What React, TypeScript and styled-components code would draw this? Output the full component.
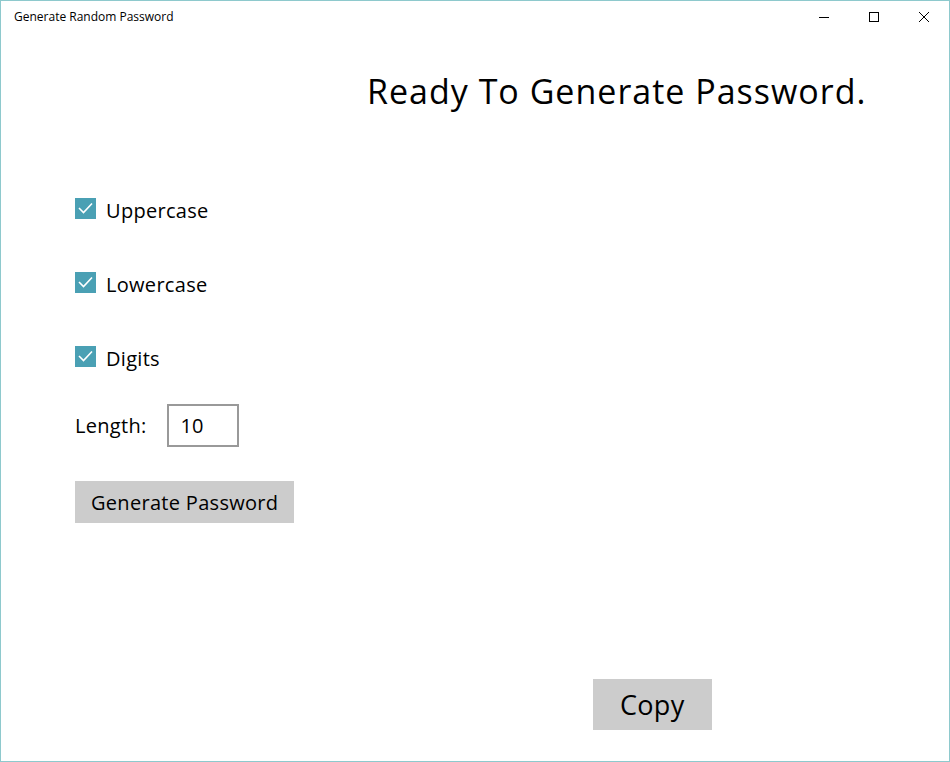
import React, {useState} from 'react';
import styled, {createGlobalStyle} from 'styled-components';

const GlobalStyle = createGlobalStyle`
  html, body {
    margin: 0;
    padding: 0;
    background: #ffffff;
  }
  body {
    font-family: "Open Sans", "Noto Sans", sans-serif;
    color: #000000;
  }
`;

const Window = styled.div`
  display: flex;
  flex-direction: column;
  width: 950px;
  height: 762px;
  box-sizing: border-box;
  border: 1px solid #8ec9cd;
  background: #ffffff;
`;

const TitleBar = styled.div`
  display: flex;
  align-items: center;
  height: 31px;
  flex-shrink: 0;
`;

const TitleText = styled.span`
  flex: 1;
  padding-left: 13px;
  font-size: 12px;
  color: #000000;
`;

const WinButton = styled.div`
  display: flex;
  align-items: center;
  justify-content: center;
  width: 50px;
  height: 31px;
`;

const Content = styled.div`
  flex: 1;
  display: flex;
  flex-direction: column;
  padding: 0 0 30px 74px;
`;

const Heading = styled.h1`
  margin: 36px 0 0 292px;
  font-size: 34px;
  font-weight: 400;
  letter-spacing: 1px;
  line-height: 46px;
  white-space: nowrap;
`;

const Options = styled.div`
  display: flex;
  flex-direction: column;
  margin-top: 80px;
`;

const CheckRow = styled.label`
  display: flex;
  align-items: center;
  gap: 10px;
  height: 32px;
  margin-bottom: 42px;
  font-size: 20px;
  letter-spacing: 0.3px;
  cursor: pointer;
`;

const Box = styled.span<{$on: boolean}>`
  display: flex;
  align-items: center;
  justify-content: center;
  width: 21px;
  height: 21px;
  background: ${(p) => (p.$on ? '#4aa0b4' : '#ffffff')};
  border: ${(p) => (p.$on ? 'none' : '2px solid #333')};
  box-sizing: border-box;
  margin-top: -4px;
`;

const LengthRow = styled.div`
  display: flex;
  align-items: center;
  gap: 20px;
  margin-top: -12px;
  font-size: 20px;
  letter-spacing: 0.3px;
`;

const LengthInput = styled.input`
  width: 72px;
  height: 43px;
  box-sizing: border-box;
  border: 2px solid #999999;
  padding: 0 12px;
  font-family: inherit;
  font-size: 20px;
  color: #000000;
  outline: none;
`;

const GrayButton = styled.button<{$big?: boolean}>`
  border: none;
  background: #cccccc;
  color: #000000;
  font-family: inherit;
  font-size: ${(p) => (p.$big ? '27px' : '20px')};
  letter-spacing: 0.3px;
  padding: 0 ${(p) => (p.$big ? '27px' : '16px')};
  height: ${(p) => (p.$big ? '51px' : '42px')};
  cursor: pointer;
`;

const GenerateWrap = styled.div`
  margin-top: 34px;
`;

const Footer = styled.div`
  margin-top: auto;
  margin-bottom: 1px;
  padding-left: 518px;
`;

const Check = () => (
  <svg width="15" height="12" viewBox="0 0 15 12">
    <path d="M1 6 L5.5 10.5 L14 1.5" fill="none" stroke="#ffffff" strokeWidth="1.6" />
  </svg>
);

export default function App() {
  const [flags, setFlags] = useState({upper: true, lower: true, digits: true});
  const [length, setLength] = useState('10');

  const toggle = (key: keyof typeof flags) =>
    setFlags((f) => ({...f, [key]: !f[key]}));

  const items: {key: keyof typeof flags, label: string}[] = [
    {key: 'upper', label: 'Uppercase'},
    {key: 'lower', label: 'Lowercase'},
    {key: 'digits', label: 'Digits'},
  ];

  return (
    <>
      <GlobalStyle />
      <Window>
        <TitleBar>
          <TitleText>Generate Random Password</TitleText>
          <WinButton>
            <svg width="10" height="10" viewBox="0 0 10 10">
              <path d="M0 5.5 H10" stroke="#000" strokeWidth="1" />
            </svg>
          </WinButton>
          <WinButton>
            <svg width="10" height="10" viewBox="0 0 10 10">
              <rect x="0.5" y="0.5" width="9" height="9" fill="none" stroke="#000" strokeWidth="1" />
            </svg>
          </WinButton>
          <WinButton>
            <svg width="10" height="10" viewBox="0 0 10 10">
              <path d="M0 0 L10 10 M10 0 L0 10" stroke="#000" strokeWidth="1" />
            </svg>
          </WinButton>
        </TitleBar>
        <Content>
          <Heading>Ready To Generate Password.</Heading>
          <Options>
            {items.map((it) => (
              <CheckRow key={it.key} onClick={() => toggle(it.key)}>
                <Box $on={flags[it.key]}>{flags[it.key] && <Check />}</Box>
                {it.label}
              </CheckRow>
            ))}
            <LengthRow>
              Length:
              <LengthInput value={length} onChange={(e) => setLength(e.target.value)} />
            </LengthRow>
            <GenerateWrap>
              <GrayButton>Generate Password</GrayButton>
            </GenerateWrap>
          </Options>
          <Footer>
            <GrayButton $big>Copy</GrayButton>
          </Footer>
        </Content>
      </Window>
    </>
  );
}
